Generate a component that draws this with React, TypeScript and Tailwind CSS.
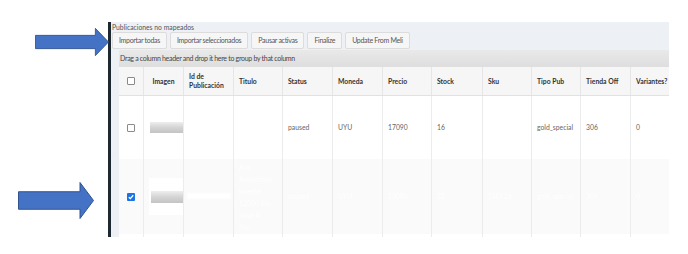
import React from "react";

const cols = [
  { label: "", w: 24 },
  { label: "Imagen", w: 40, center: true },
  { label: "Id de Publicación", w: 50 },
  { label: "Titulo", w: 49 },
  { label: "Status", w: 50 },
  { label: "Moneda", w: 50 },
  { label: "Precio", w: 49 },
  { label: "Stock", w: 51 },
  { label: "Sku", w: 49 },
  { label: "Tipo Pub", w: 49 },
  { label: "Tienda Off", w: 50 },
  { label: "Variantes?", w: 60 },
];

const row1 = ["", "", "", "", "paused", "UYU", "17090", "16", "", "gold_special", "306", "0"];
const row2 = ["", "", "", "", "paused", "UYU", "13090", "32", "580126", "gold_special", "306", "0"];

function Arrow({ className }: { className: string }) {
  return (
    <svg className={className} viewBox="0 0 76 38" preserveAspectRatio="none">
      <polygon
        points="0.5,10 62,10 62,0.5 75.5,19 62,37.5 62,28 0.5,28"
        fill="#4472c4"
        stroke="#2f528f"
        strokeWidth="1"
      />
    </svg>
  );
}

function Box({ checked }: { checked?: boolean }) {
  if (checked)
    return (
      <div className="w-[8px] h-[8px] rounded-[1px] bg-[#1a73e8] flex items-center justify-center">
        <svg viewBox="0 0 8 8" className="w-[8px] h-[8px]">
          <path d="M1.8 4.2 L3.3 5.6 L6.2 2.3" stroke="white" strokeWidth="1.3" fill="none" />
        </svg>
      </div>
    );
  return <div className="w-[8px] h-[8px] rounded-[1px] border border-[#8a8a8a] bg-white" />;
}

const grid =
  "grid grid-cols-[24px_40px_50px_49px_50px_50px_49px_51px_49px_49px_50px_60px]";

export default function App() {
  return (
    <div
      className="relative w-[688px] h-[254px] bg-white overflow-hidden"
      style={{ fontFamily: "Lato, 'Noto Sans', sans-serif" }}
    >
      <div className="pt-[22px] pl-[108px]">
        <div className="w-[561px] h-[215px] border-l-[3px] border-[#1e2831] bg-[#edf0f5] flex flex-col">
          <div className="h-[10px] pl-[1px] text-[6.8px] leading-[10px] text-[#555]">
            Publicaciones no mapeados
          </div>
          <div className="flex gap-[3px] pl-[1px] h-[17px]">
            {["Importar todas", "Importar seleccionados", "Pausar activas", "Finalize", "Update From Meli"].map(
              (b) => (
                <div
                  key={b}
                  className="h-[17px] px-[6px] flex items-center border border-[#dcdcdc] rounded-[2px] bg-[#f6f6f6] text-[7px] tracking-[-0.3px] text-[#555]"
                >
                  {b}
                </div>
              )
            )}
          </div>
          <div className="ml-[8px] mt-[1px] w-[550px] flex-1 flex flex-col overflow-hidden">
            <div className="h-[17px] shrink-0 bg-gradient-to-b from-[#e9e9e9] to-[#dedede] flex items-center pl-[1px] text-[7px] tracking-[-0.3px] text-[#444]">
              Drag a column header and drop it here to group by that column
            </div>
            <div className={`${grid} h-[29px] shrink-0 bg-[#f6f6f6] border-b border-[#e2e2e2]`}>
              {cols.map((c, i) => (
                <div
                  key={i}
                  className={`flex items-center text-[6.8px] leading-[9px] font-bold text-[#333] ${
                    i > 0 ? "border-l border-[#e6e6e6]" : ""
                  } ${c.center || i === 0 ? "justify-center" : "pl-[5px]"}`}
                >
                  {i === 0 ? <Box /> : c.label === "Id de Publicación" ? <span>Id de<br />Publicación</span> : c.label}
                </div>
              ))}
            </div>
            <div className={`${grid} h-[63px] shrink-0 bg-white`}>
              {row1.map((v, i) => (
                <div
                  key={i}
                  className={`relative flex items-center text-[6.8px] text-[#666] ${
                    i > 0 ? "border-l border-[#ececec]" : ""
                  } ${i <= 1 ? "justify-center" : "pl-[5px]"}`}
                >
                  {i === 0 && <Box />}
                  {i === 1 && (
                    <div className="absolute left-[6px] right-0 top-[26px] h-[11px] bg-gradient-to-b from-[#eeeeee] via-[#d4d4d4] to-[#c4c4c4] blur-[0.6px]" />
                  )}
                  {v}
                </div>
              ))}
            </div>
            <div className={`${grid} h-[75px] shrink-0 bg-[#fafafa]`}>
              {row2.map((v, i) => (
                <div
                  key={i}
                  className={`relative flex items-center text-[6.8px] text-white ${
                    i > 0 ? "border-l border-[#ececec]" : ""
                  } ${i <= 1 ? "justify-center" : "pl-[5px]"}`}
                >
                  {i === 0 && <Box checked />}
                  {i === 1 && (
                    <>
                      <div className="absolute left-[5px] right-0 top-[19px] h-[37px] bg-white" />
                      <div className="absolute left-[7px] right-0 top-[32px] h-[12px] bg-gradient-to-b from-[#eeeeee] via-[#d4d4d4] to-[#c4c4c4] blur-[0.6px]" />
                    </>
                  )}
                  {i === 2 && (
                    <div className="absolute left-[3px] right-[2px] top-[34px] h-[6px] bg-white blur-[1px]" />
                  )}
                  {i === 3 ? (
                    <span className="leading-[12px]">
                      Aire
                      <br />
                      Acondicion
                      <br />
                      Inverter
                      <br />
                      12000 btu
                      <br />
                      clase A
                      <br />
                      frío
                    </span>
                  ) : (
                    v
                  )}
                </div>
              ))}
            </div>
            <div className={`${grid} flex-1 bg-white`}>
              {cols.map((c, i) => (
                <div key={i} className={i > 0 ? "border-l border-[#ececec]" : ""} />
              ))}
            </div>
          </div>
        </div>
      </div>
      <Arrow className="absolute left-[35px] top-[28px] w-[74px] h-[28px]" />
      <Arrow className="absolute left-[18px] top-[182px] w-[76px] h-[37px]" />
    </div>
  );
}
